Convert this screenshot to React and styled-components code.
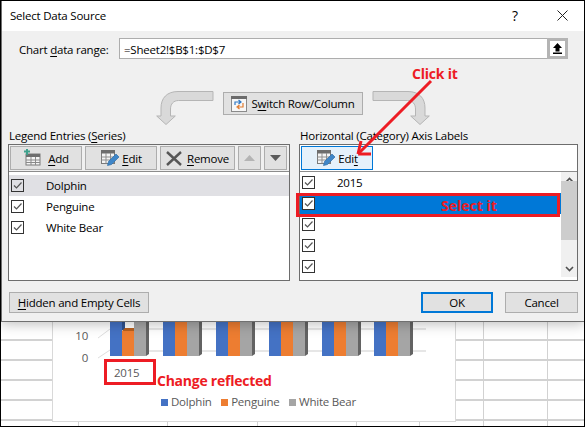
import React from "react";
import styled, { createGlobalStyle } from "styled-components";

const Global = createGlobalStyle`
  html, body { margin: 0; padding: 0; background: #fff; }
  * { box-sizing: border-box; }
`;

const RED = "#ed1c24";
const UI = `"Open Sans", "Noto Sans", sans-serif`;
const BOLD = `"Open Sans", "Noto Sans", sans-serif`;

const Screen = styled.div`
  position: relative;
  width: 585px;
  height: 427px;
  overflow: hidden;
  display: flex;
  flex-direction: column;
  border: 1px solid #000;
  background: #fff;
  font-family: ${UI};
  font-size: 11.5px;
  letter-spacing: -0.22px;
  color: #000;
`;

const Dialog = styled.section`
  position: relative;
  z-index: 2;
  flex: none;
  width: 583px;
  height: 321px;
  display: flex;
  flex-direction: column;
  background: #f0f0f0;
  border: solid #707070;
  border-width: 0 0 1px 1px;
  box-shadow: 0 2px 12px rgba(0, 0, 0, 0.26);
`;

const TitleBar = styled.header`
  flex: none;
  height: 30px;
  display: flex;
  align-items: center;
  padding: 0 16px 2px 8px;
  background: #fff;
`;

const Title = styled.h1`
  flex: 1;
  margin: 0;
  font: inherit;
  font-size: 11.5px;
`;

const HelpMark = styled.span`
  width: 45px;
  font-size: 14px;
`;

const Body = styled.div`
  flex: 1;
  display: flex;
  flex-direction: column;
  padding: 7px 6px 0 6px;
`;

const RangeRow = styled.div`
  display: flex;
  align-items: center;
  height: 21px;
  padding-left: 11px;
  padding-right: 10px;
`;

const RangeLabel = styled.label`
  width: 100px;
  padding-top: 1px;
`;

const RangeField = styled.div`
  flex: 1;
  height: 21px;
  display: flex;
  align-items: center;
  justify-content: space-between;
  padding-left: 4px;
  background: #fff;
  border: 1px solid #adadad;
`;

const RangeValue = styled.span`
  padding-top: 1px;
`;

const Collapse = styled.div`
  width: 21px;
  height: 21px;
  margin-right: -1px;
  display: flex;
  align-items: center;
  justify-content: center;
  background: #fff;
  border: 3px solid #b4b4b4;
`;

const SwitchRow = styled.div`
  display: flex;
  justify-content: center;
  gap: 9px;
  height: 34px;
  margin-top: 32px;
`;

const Button = styled.div`
  width: ${(p) => p.$w}px;
  height: ${(p) => p.$h || 24}px;
  flex: none;
  display: flex;
  align-items: center;
  justify-content: center;
  gap: ${(p) => p.$gap ?? 5}px;
  background: ${(p) => (p.$hot ? "#e5f1fb" : "#e1e1e1")};
  border: ${(p) => (p.$def ? 2 : 1)}px solid
    ${(p) => (p.$hot || p.$def ? "#0078d7" : "#adadad")};
  white-space: nowrap;
`;

const SwitchButton = styled(Button)`
  margin-top: 1px;
`;

const Panels = styled.div`
  display: flex;
  gap: 9px;
  margin-top: 3px;
`;

const Column = styled.div`
  width: ${(p) => p.$w}px;
  display: flex;
  flex-direction: column;
`;

const Heading = styled.div`
  height: 16px;
  line-height: 15px;
  padding-left: 1px;
`;

const Panel = styled.div`
  height: 137px;
  display: flex;
  flex-direction: column;
  background: #fff;
  border: 1px solid #6d6d6d;
`;

const Toolbar = styled.div`
  flex: none;
  height: 27px;
  display: flex;
  gap: 3px;
  padding: 1px 1px 0;
  background: #f0f0f0;
  border-bottom: 1px solid #8c8c8c;
`;

const WhiteToolbar = styled(Toolbar)`
  background: #fff;
`;

const ListArea = styled.div`
  flex: 1;
  display: flex;
  min-height: 0;
`;

const List = styled.ul`
  flex: 1;
  margin: 0;
  padding: ${(p) => p.$top || 0}px 0 0;
  list-style: none;
`;

const Row = styled.li`
  position: relative;
  height: 21px;
  display: flex;
  align-items: center;
  padding-left: ${(p) => p.$pad}px;
  gap: ${(p) => p.$gap}px;
  background: ${(p) => (p.$sel ? "#0078d7" : p.$soft ? "#e0e0e4" : "transparent")};
`;

const Check = styled.span`
  width: 13px;
  height: 13px;
  flex: none;
  display: flex;
  background: ${(p) => (p.$on ? "#fff" : "transparent")};
  border: 1px solid #333;
`;

const Scrollbar = styled.div`
  flex: none;
  width: 16px;
  height: 105px;
  display: flex;
  flex-direction: column;
  justify-content: space-between;
  align-items: center;
  background: #f0f0f0;
  position: relative;
`;

const ScrollArrow = styled.div`
  height: 16px;
  display: flex;
  align-items: center;
`;

const Thumb = styled.div`
  width: 16px;
  height: 59px;
  margin-top: -15px;
  margin-bottom: 14px;
  background: #cdcdcd;
`;

const SelectBox = styled.div`
  position: absolute;
  left: -4px;
  top: 0;
  width: 264px;
  height: 24px;
  display: flex;
  align-items: center;
  padding: 0 0 0 142px;
  border: 3px solid ${RED};
  color: ${RED};
  font-family: ${BOLD};
  font-size: 14px;
  font-weight: 700;
  letter-spacing: 0;
`;

const Footer = styled.div`
  display: flex;
  align-items: flex-start;
  margin-top: 11px;
  padding-left: 1px;
  gap: 12px;
`;

const FooterGap = styled.div`
  flex: 1;
`;

const Sheet = styled.div`
  position: relative;
  flex: 1;
  background-color: #fff;
  background-image:
    repeating-linear-gradient(to bottom, transparent 0 18px, #d2d2d2 18px 20px),
    linear-gradient(to right, transparent 482px, #d2d2d2 482px 483px, transparent 483px 546px, #d2d2d2 546px 547px, transparent 547px);
  background-position: 0 -1px, 0 0;
`;

const ChartCard = styled.div`
  width: 404px;
  height: 100px;
  margin-left: 51px;
  display: flex;
  flex-direction: column;
  background: #fff;
  border: 1px solid #d9d9d9;
  border-top: 0;
`;

const Ticks = styled.div`
  position: absolute;
  left: 0;
  right: 0;
  bottom: 0;
  height: 4px;
  background-image: linear-gradient(to right, transparent 77px, #d2d2d2 77px 78px, transparent 78px 166px, #d2d2d2 166px 167px, transparent 167px 256px, #d2d2d2 256px 257px, transparent 257px 355px, #d2d2d2 355px 356px, transparent 356px 418px, #d2d2d2 418px 419px, transparent 419px);
`;

const Plot = styled.svg`
  display: block;
  flex: none;
`;

const Legend = styled.div`
  display: flex;
  gap: 9.5px;
  padding-left: 108px;
  color: #595959;
  font-size: 11.5px;
  line-height: 16px;
`;

const LegendItem = styled.span`
  display: flex;
  align-items: center;
  gap: 3px;
  &::before {
    content: "";
    width: 7px;
    height: 7px;
    background: ${(p) => p.$c};
  }
`;

const CategoryBox = styled.div`
  position: absolute;
  left: 103px;
  top: 37px;
  width: 52px;
  height: 26px;
  display: flex;
  align-items: center;
  padding-left: 7px;
  border: 3px solid ${RED};
  color: #595959;
  font-size: 11.5px;
`;

const Callout = styled.div`
  position: absolute;
  left: ${(p) => p.$x}px;
  top: ${(p) => p.$y}px;
  color: ${RED};
  font-family: ${BOLD};
  font-size: 14px;
  font-weight: 700;
  line-height: 18px;
  letter-spacing: ${(p) => p.$track || 0}px;
  white-space: nowrap;
  z-index: 3;
`;

const Pointer = styled.svg`
  position: absolute;
  left: 340px;
  top: 70px;
  z-index: 3;
`;

const K = styled.u`
  text-underline-offset: 2px;
`;

const TableIcon = ({ plus, pencil }) => (
  <svg width="20" height="18" viewBox="0 0 20 18">
    {plus ? (
      <>
        <rect x="3" y="5" width="14" height="11" fill="#f4f4f4" stroke="#7b7b7b" />
        <path d="M3 5h14v3H3z" fill="#6d6d6d" />
        <path d="M3 11h14M3 13.5h14M8 8v8M12.5 8v8" stroke="#8a8a8a" />
        <path d="M1 2.5h6M4 0v6" stroke="#3fa08c" strokeWidth="2" />
      </>
    ) : (
      <>
        <rect x="1.5" y="1.5" width="13" height="13" fill="#f4f4f4" stroke="#7b7b7b" />
        <path d="M1 1h14v3.5H1z" fill="#6d6d6d" />
        <path d="M1.5 8h13M1.5 11h13M6 4v10.5M10.500 4v10.5" stroke="#8f8f8f" />
      </>
    )}
    {pencil && (
      <path d="M7.500 16.500l1-4 7.500-7.500 3 3-7.500 7.500z" fill="#3f86c8" stroke="#2f6ea8" strokeWidth=".7" />
    )}
  </svg>
);

const RemoveIcon = () => (
  <svg width="16" height="15" viewBox="0 0 16 15">
    <path d="M1 1l14 13M15 1L1 14" stroke="#565656" strokeWidth="2.400" />
  </svg>
);

const SwapIcon = () => (
  <svg width="16" height="16" viewBox="0 0 16 16">
    <rect x=".5" y=".5" width="15" height="15" fill="#f7f7f7" stroke="#8a8a8a" />
    <path d="M0 0h16v3H0z" fill="#6b6b6b" />
    <path d="M4 9V6h5M7.500 4L10 6 7.500 8" fill="none" stroke="#2f78c4" strokeWidth="1.200" />
    <path d="M12 7v4H7M8.500 9L6 11l2.500 2" fill="none" stroke="#e07b2f" strokeWidth="1.200" />
  </svg>
);

const Tick = () => (
  <svg width="11" height="11" viewBox="0 0 11 11">
    <path d="M2 5.500l2.500 2.500L9.500 2.500" fill="none" stroke="#555" strokeWidth="1.200" />
  </svg>
);

const Triangle = ({ up, color }) => (
  <svg width="11" height="6" viewBox="0 0 11 6">
    <path d={up ? "M0 6L5.500 0 11 6z" : "M0 0h11L5.500 6z"} fill={color} />
  </svg>
);

const Chevron = ({ up }) => (
  <svg width="9" height="6" viewBox="0 0 9 6">
    <path d={up ? "M1 5l3.500-3.500L8 5" : "M1 1l3.500 3.500L8 1"} fill="none" stroke="#505050" strokeWidth="1.600" />
  </svg>
);

const BendArrow = ({ flip }) => (
  <svg width="58" height="34" viewBox="0 0 58 34">
    <path
      transform={flip ? "matrix(-1 0 0 1 58 0)" : undefined}
      d="M57 .5H22C11 .5 5 7 5 17v8H.7l9.300 8.500 9.300-8.500H14.500v-7c0-5 3-8.500 8-8.500H57z"
      fill="#d9d9d9"
      stroke="#b5b5b5"
    />
  </svg>
);

const groups = [110, 163, 216, 269, 322, 374];

const BarChart = () => (
  <Plot width="402" height="72" viewBox="53 322 402 72">
    <path d="M110 329h316M110 351h316" stroke="#dedede" strokeWidth="1.500" />
    <path d="M98 338l12-9M98 358l12-8" stroke="#dedede" />
    {groups.map((x, i) => (
      <g key={x}>
        <rect x={x} y="322" width="12" height="34" fill="#4472c4" />
        {i === 0 && <rect x={x + 12} y="322" width="3" height="8" fill="#2f528f" />}
        <rect x={x + 12} y={i === 0 ? 331 : 322} width="12" height={i === 0 ? 25 : 34} fill="#ed7d31" />
        {i === 0 && <path d="M122 331l3-3h12l-3 3z" fill="#b8601f" />}
        <rect x={x + 24} y="322" width="12" height="34" fill="#a5a5a5" />
        <path d={`M${x + 36} 322h3v32l-3 2z`} fill="#636363" />
      </g>
    ))}
    <text x="88" y="340" textAnchor="end" fontSize="11.5" fill="#595959" fontFamily={UI}>10</text>
    <text x="88" y="362" textAnchor="end" fontSize="11.5" fill="#595959" fontFamily={UI}>0</text>
  </Plot>
);

const leftRows = ["Dolphin", "Penguine", "White Bear"];

export default function App() {
  return (
    <Screen>
      <Global />
      <Dialog>
        <TitleBar>
          <Title>Select Data Source</Title>
          <HelpMark>?</HelpMark>
          <svg width="11" height="11" viewBox="0 0 11 11">
            <path d="M.5.500l10 10M10.500.500l-10 10" stroke="#222" />
          </svg>
        </TitleBar>
        <Body>
          <RangeRow>
            <RangeLabel>
              Chart <K>d</K>ata range:
            </RangeLabel>
            <RangeField>
              <RangeValue>=Sheet2!$B$1:$D$7</RangeValue>
              <Collapse>
                <svg width="11" height="11" viewBox="0 0 11 11">
                  <path d="M5.500 0L10 5H7.500v3.500h-4V5H1zM1 9.500h9V11H1z" fill="#000" />
                </svg>
              </Collapse>
            </RangeField>
          </RangeRow>
          <SwitchRow>
            <BendArrow />
            <SwitchButton $w={140} $h={23} $gap={4}>
              <SwapIcon />
              <span>
                S<K>w</K>itch Row/Column
              </span>
            </SwitchButton>
            <BendArrow flip />
          </SwitchRow>
          <Panels>
            <Column $w={282}>
              <Heading>
                Legend Entries (<K>S</K>eries)
              </Heading>
              <Panel>
                <Toolbar>
                  <Button $w={72}>
                    <TableIcon plus />
                    <span><K>A</K>dd</span>
                  </Button>
                  <Button $w={72} $gap={2}>
                    <TableIcon pencil />
                    <span><K>E</K>dit</span>
                  </Button>
                  <Button $w={75}>
                    <RemoveIcon />
                    <span><K>R</K>emove</span>
                  </Button>
                  <Button $w={23}><Triangle up color="#b4b4b4" /></Button>
                  <Button $w={23}><Triangle color="#5a5a5a" /></Button>
                </Toolbar>
                <List $top={3}>
                  {leftRows.map((t, i) => (
                    <Row key={t} $pad={2} $gap={22} $soft={i === 0}>
                      <Check><Tick /></Check>
                      {t}
                    </Row>
                  ))}
                </List>
              </Panel>
            </Column>
            <Column $w={279}>
              <Heading>
                Horizontal (Category) Axis Labels
              </Heading>
              <Panel>
                <WhiteToolbar>
                  <Button $w={72} $hot $gap={2}>
                    <TableIcon pencil />
                    <span>Edi<K>t</K></span>
                  </Button>
                </WhiteToolbar>
                <ListArea>
                  <List>
                    <Row $pad={2} $gap={22}><Check><Tick /></Check>2015</Row>
                    <Row $pad={2} $gap={22} $sel>
                      <Check $on><Tick /></Check>
                      <SelectBox>Select it</SelectBox>
                    </Row>
                    <Row $pad={2} $gap={22}><Check><Tick /></Check></Row>
                    <Row $pad={2} $gap={22}><Check><Tick /></Check></Row>
                    <Row $pad={2} $gap={22}><Check><Tick /></Check></Row>
                  </List>
                  <Scrollbar>
                    <ScrollArrow><Chevron up /></ScrollArrow>
                    <Thumb />
                    <ScrollArrow><Chevron /></ScrollArrow>
                  </Scrollbar>
                </ListArea>
              </Panel>
            </Column>
          </Panels>
          <Footer>
            <Button $w={140} $h={21}><span><K>H</K>idden and Empty Cells</span></Button>
            <FooterGap />
            <Button $w={72} $h={21} $def>OK</Button>
            <Button $w={73} $h={21}>Cancel</Button>
          </Footer>
        </Body>
      </Dialog>
      <Sheet>
        <ChartCard>
          <BarChart />
          <Legend>
            <LegendItem $c="#4472c4">Dolphin</LegendItem>
            <LegendItem $c="#ed7d31">Penguine</LegendItem>
            <LegendItem $c="#a5a5a5">White Bear</LegendItem>
          </Legend>
        </ChartCard>
        <Ticks />
        <CategoryBox>2015</CategoryBox>
        <Callout $x={156} $y={50} $track={-0.25}>Change reflected</Callout>
      </Sheet>
      <Callout $x={411} $y={64} $track={-0.2}>Click it</Callout>
      <Pointer width="100" height="90" viewBox="0 0 100 90">
        <path d="M90 10L18 82" stroke={RED} strokeWidth="3" fill="none" />
        <path d="M17 83l3-13M17 83l13 0" stroke={RED} strokeWidth="3" fill="none" />
      </Pointer>
    </Screen>
  );
}
